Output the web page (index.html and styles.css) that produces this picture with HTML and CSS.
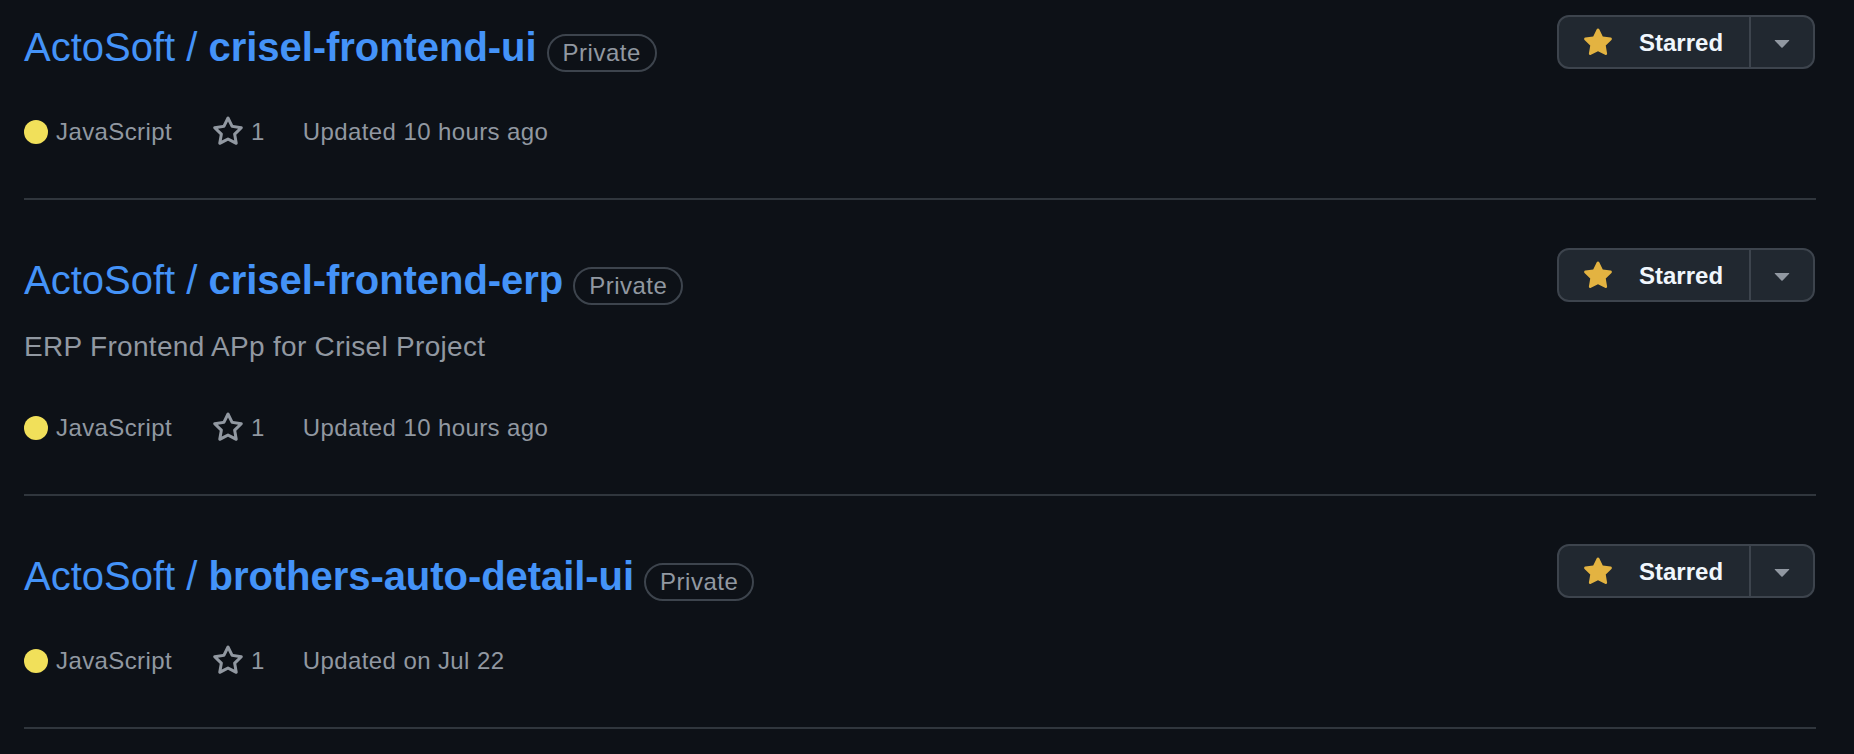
FILE: index.html
```html
<!DOCTYPE html>
<html lang="en">
<head>
<meta charset="utf-8">
<title>Starred repositories</title>
<link rel="stylesheet" href="styles.css">
</head>
<body>
<ul class="repo-list">
  <li class="repo">
    <div class="repo-main">
      <h3 class="repo-title"><a class="repo-link" href="#">ActoSoft / <strong>crisel-frontend-ui</strong></a><span class="label">Private</span></h3>
      <div class="meta">
        <span class="lang"><span class="lang-dot"></span>JavaScript</span>
        <span class="stars"><svg class="icon-star" viewBox="0 0 16 16" width="32" height="32"><path d="M8 .25a.75.75 0 0 1 .673.418l1.882 3.815 4.21.612a.75.75 0 0 1 .416 1.279l-3.046 2.97.719 4.192a.751.751 0 0 1-1.088.791L8 12.347l-3.766 1.98a.75.75 0 0 1-1.088-.79l.72-4.194L.818 6.374a.75.75 0 0 1 .416-1.28l4.21-.611L7.327.668A.75.75 0 0 1 8 .25Zm0 2.445L6.615 5.5a.75.75 0 0 1-.564.41l-3.097.45 2.24 2.184a.75.75 0 0 1 .216.664l-.528 3.084 2.769-1.456a.75.75 0 0 1 .698 0l2.77 1.456-.53-3.084a.75.75 0 0 1 .216-.664l2.24-2.183-3.096-.45a.75.75 0 0 1-.564-.41L8 2.694Z"/></svg>1</span>
        <span class="updated">Updated 10 hours ago</span>
      </div>
    </div>
    <div class="star-btn">
      <button class="star-main"><svg class="icon-star-fill" viewBox="0 0 16 16" width="32" height="32"><path d="M8 .25a.75.75 0 0 1 .673.418l1.882 3.815 4.21.612a.75.75 0 0 1 .416 1.279l-3.046 2.97.719 4.192a.751.751 0 0 1-1.088.791L8 12.347l-3.766 1.98a.75.75 0 0 1-1.088-.79l.72-4.194L.818 6.374a.75.75 0 0 1 .416-1.28l4.21-.611L7.327.668A.75.75 0 0 1 8 .25Z"/></svg><span>Starred</span></button>
      <button class="star-menu"><svg class="icon-caret" viewBox="0 0 16 16" width="32" height="32"><path d="m4.427 7.427 3.396 3.396a.25.25 0 0 0 .354 0l3.396-3.396A.25.25 0 0 0 11.396 7H4.604a.25.25 0 0 0-.177.427Z"/></svg></button>
    </div>
  </li>
  <li class="repo">
    <div class="repo-main">
      <h3 class="repo-title"><a class="repo-link" href="#">ActoSoft / <strong>crisel-frontend-erp</strong></a><span class="label">Private</span></h3>
      <p class="desc">ERP Frontend APp for Crisel Project</p>
      <div class="meta">
        <span class="lang"><span class="lang-dot"></span>JavaScript</span>
        <span class="stars"><svg class="icon-star" viewBox="0 0 16 16" width="32" height="32"><path d="M8 .25a.75.75 0 0 1 .673.418l1.882 3.815 4.21.612a.75.75 0 0 1 .416 1.279l-3.046 2.97.719 4.192a.751.751 0 0 1-1.088.791L8 12.347l-3.766 1.98a.75.75 0 0 1-1.088-.79l.72-4.194L.818 6.374a.75.75 0 0 1 .416-1.28l4.21-.611L7.327.668A.75.75 0 0 1 8 .25Zm0 2.445L6.615 5.5a.75.75 0 0 1-.564.41l-3.097.45 2.24 2.184a.75.75 0 0 1 .216.664l-.528 3.084 2.769-1.456a.75.75 0 0 1 .698 0l2.77 1.456-.53-3.084a.75.75 0 0 1 .216-.664l2.24-2.183-3.096-.45a.75.75 0 0 1-.564-.41L8 2.694Z"/></svg>1</span>
        <span class="updated">Updated 10 hours ago</span>
      </div>
    </div>
    <div class="star-btn">
      <button class="star-main"><svg class="icon-star-fill" viewBox="0 0 16 16" width="32" height="32"><path d="M8 .25a.75.75 0 0 1 .673.418l1.882 3.815 4.21.612a.75.75 0 0 1 .416 1.279l-3.046 2.97.719 4.192a.751.751 0 0 1-1.088.791L8 12.347l-3.766 1.98a.75.75 0 0 1-1.088-.79l.72-4.194L.818 6.374a.75.75 0 0 1 .416-1.28l4.21-.611L7.327.668A.75.75 0 0 1 8 .25Z"/></svg><span>Starred</span></button>
      <button class="star-menu"><svg class="icon-caret" viewBox="0 0 16 16" width="32" height="32"><path d="m4.427 7.427 3.396 3.396a.25.25 0 0 0 .354 0l3.396-3.396A.25.25 0 0 0 11.396 7H4.604a.25.25 0 0 0-.177.427Z"/></svg></button>
    </div>
  </li>
  <li class="repo">
    <div class="repo-main">
      <h3 class="repo-title"><a class="repo-link" href="#">ActoSoft / <strong>brothers-auto-detail-ui</strong></a><span class="label">Private</span></h3>
      <div class="meta">
        <span class="lang"><span class="lang-dot"></span>JavaScript</span>
        <span class="stars"><svg class="icon-star" viewBox="0 0 16 16" width="32" height="32"><path d="M8 .25a.75.75 0 0 1 .673.418l1.882 3.815 4.21.612a.75.75 0 0 1 .416 1.279l-3.046 2.97.719 4.192a.751.751 0 0 1-1.088.791L8 12.347l-3.766 1.98a.75.75 0 0 1-1.088-.79l.72-4.194L.818 6.374a.75.75 0 0 1 .416-1.28l4.21-.611L7.327.668A.75.75 0 0 1 8 .25Zm0 2.445L6.615 5.5a.75.75 0 0 1-.564.41l-3.097.45 2.24 2.184a.75.75 0 0 1 .216.664l-.528 3.084 2.769-1.456a.75.75 0 0 1 .698 0l2.77 1.456-.53-3.084a.75.75 0 0 1 .216-.664l2.24-2.183-3.096-.45a.75.75 0 0 1-.564-.41L8 2.694Z"/></svg>1</span>
        <span class="updated">Updated on Jul 22</span>
      </div>
    </div>
    <div class="star-btn">
      <button class="star-main"><svg class="icon-star-fill" viewBox="0 0 16 16" width="32" height="32"><path d="M8 .25a.75.75 0 0 1 .673.418l1.882 3.815 4.21.612a.75.75 0 0 1 .416 1.279l-3.046 2.97.719 4.192a.751.751 0 0 1-1.088.791L8 12.347l-3.766 1.98a.75.75 0 0 1-1.088-.79l.72-4.194L.818 6.374a.75.75 0 0 1 .416-1.28l4.21-.611L7.327.668A.75.75 0 0 1 8 .25Z"/></svg><span>Starred</span></button>
      <button class="star-menu"><svg class="icon-caret" viewBox="0 0 16 16" width="32" height="32"><path d="m4.427 7.427 3.396 3.396a.25.25 0 0 0 .354 0l3.396-3.396A.25.25 0 0 0 11.396 7H4.604a.25.25 0 0 0-.177.427Z"/></svg></button>
    </div>
  </li>
</ul>
</body>
</html>
```

FILE: styles.css
```css
* { box-sizing: border-box; }
html, body {
  margin: 0;
  padding: 0;
  background: #0d1117;
  font-family: "Liberation Sans", Arial, sans-serif;
  color: #9198a1;
  overflow: hidden;
}
.repo-list {
  list-style: none;
  margin: 0;
  padding: 0 0 0 24px;
  width: 1816px;
}
.repo {
  display: flex;
  justify-content: space-between;
  align-items: flex-start;
  padding: 48px 0 48px;
  border-bottom: 2px solid #30363d;
}
.repo:first-child { padding-top: 15px; }
.repo-main { flex: 1; min-width: 0; }
.repo-title {
  margin: 7px 0 0;
  font-size: 40px;
  line-height: 50px;
  font-weight: 400;
  white-space: nowrap;
}
.repo-link {
  color: #4493f8;
  text-decoration: none;
}
.repo-link strong { font-weight: 700; letter-spacing: -0.05px; }
.label {
  display: inline-block;
  margin-left: 10px;
  padding: 0 14px;
  height: 38px;
  line-height: 34px;
  border: 2px solid #3d444d;
  border-radius: 999px;
  font-size: 24px;
  font-weight: 500;
  color: #9198a1;
  letter-spacing: 0.5px;
  vertical-align: baseline;
}
.desc {
  margin: 21px 0 0;
  font-size: 28px;
  line-height: 42px;
  color: #9198a1;
  letter-spacing: 0.3px;
}
.meta {
  margin-top: 42px;
  display: flex;
  align-items: center;
  height: 36px;
  font-size: 24px;
  line-height: 36px;
  color: #9198a1;
  letter-spacing: 0.4px;
}
.lang { display: flex; align-items: center; margin-right: 40px; }
.lang-dot {
  width: 24px;
  height: 24px;
  border-radius: 50%;
  background: #f1e05a;
  margin-right: 8px;
}
.stars { display: flex; align-items: center; margin-right: 38px; }
.icon-star { fill: #9198a1; margin-right: 7px; }
.star-btn {
  display: flex;
  height: 54px;
  border: 2px solid #3d444d;
  border-radius: 12px;
  background: #212830;
  overflow: hidden;
  margin-right: 1px;
}
.star-btn button {
  border: 0;
  background: transparent;
  margin: 0;
  display: flex;
  align-items: center;
  font-family: "Liberation Sans", Arial, sans-serif;
  color: #f0f6fc;
}
.star-main {
  width: 192px;
  padding: 2px 0 0 24px;
  font-size: 24px;
  font-weight: 700;
  border-right: 2px solid #3d444d !important;
}
.star-main span { margin-left: 26px; }
.icon-star-fill { fill: #e3b341; width: 30px; height: 30px; }
.star-menu {
  width: 62px;
  justify-content: center;
  padding: 0;
}
.icon-caret { fill: #9198a1; }
```
